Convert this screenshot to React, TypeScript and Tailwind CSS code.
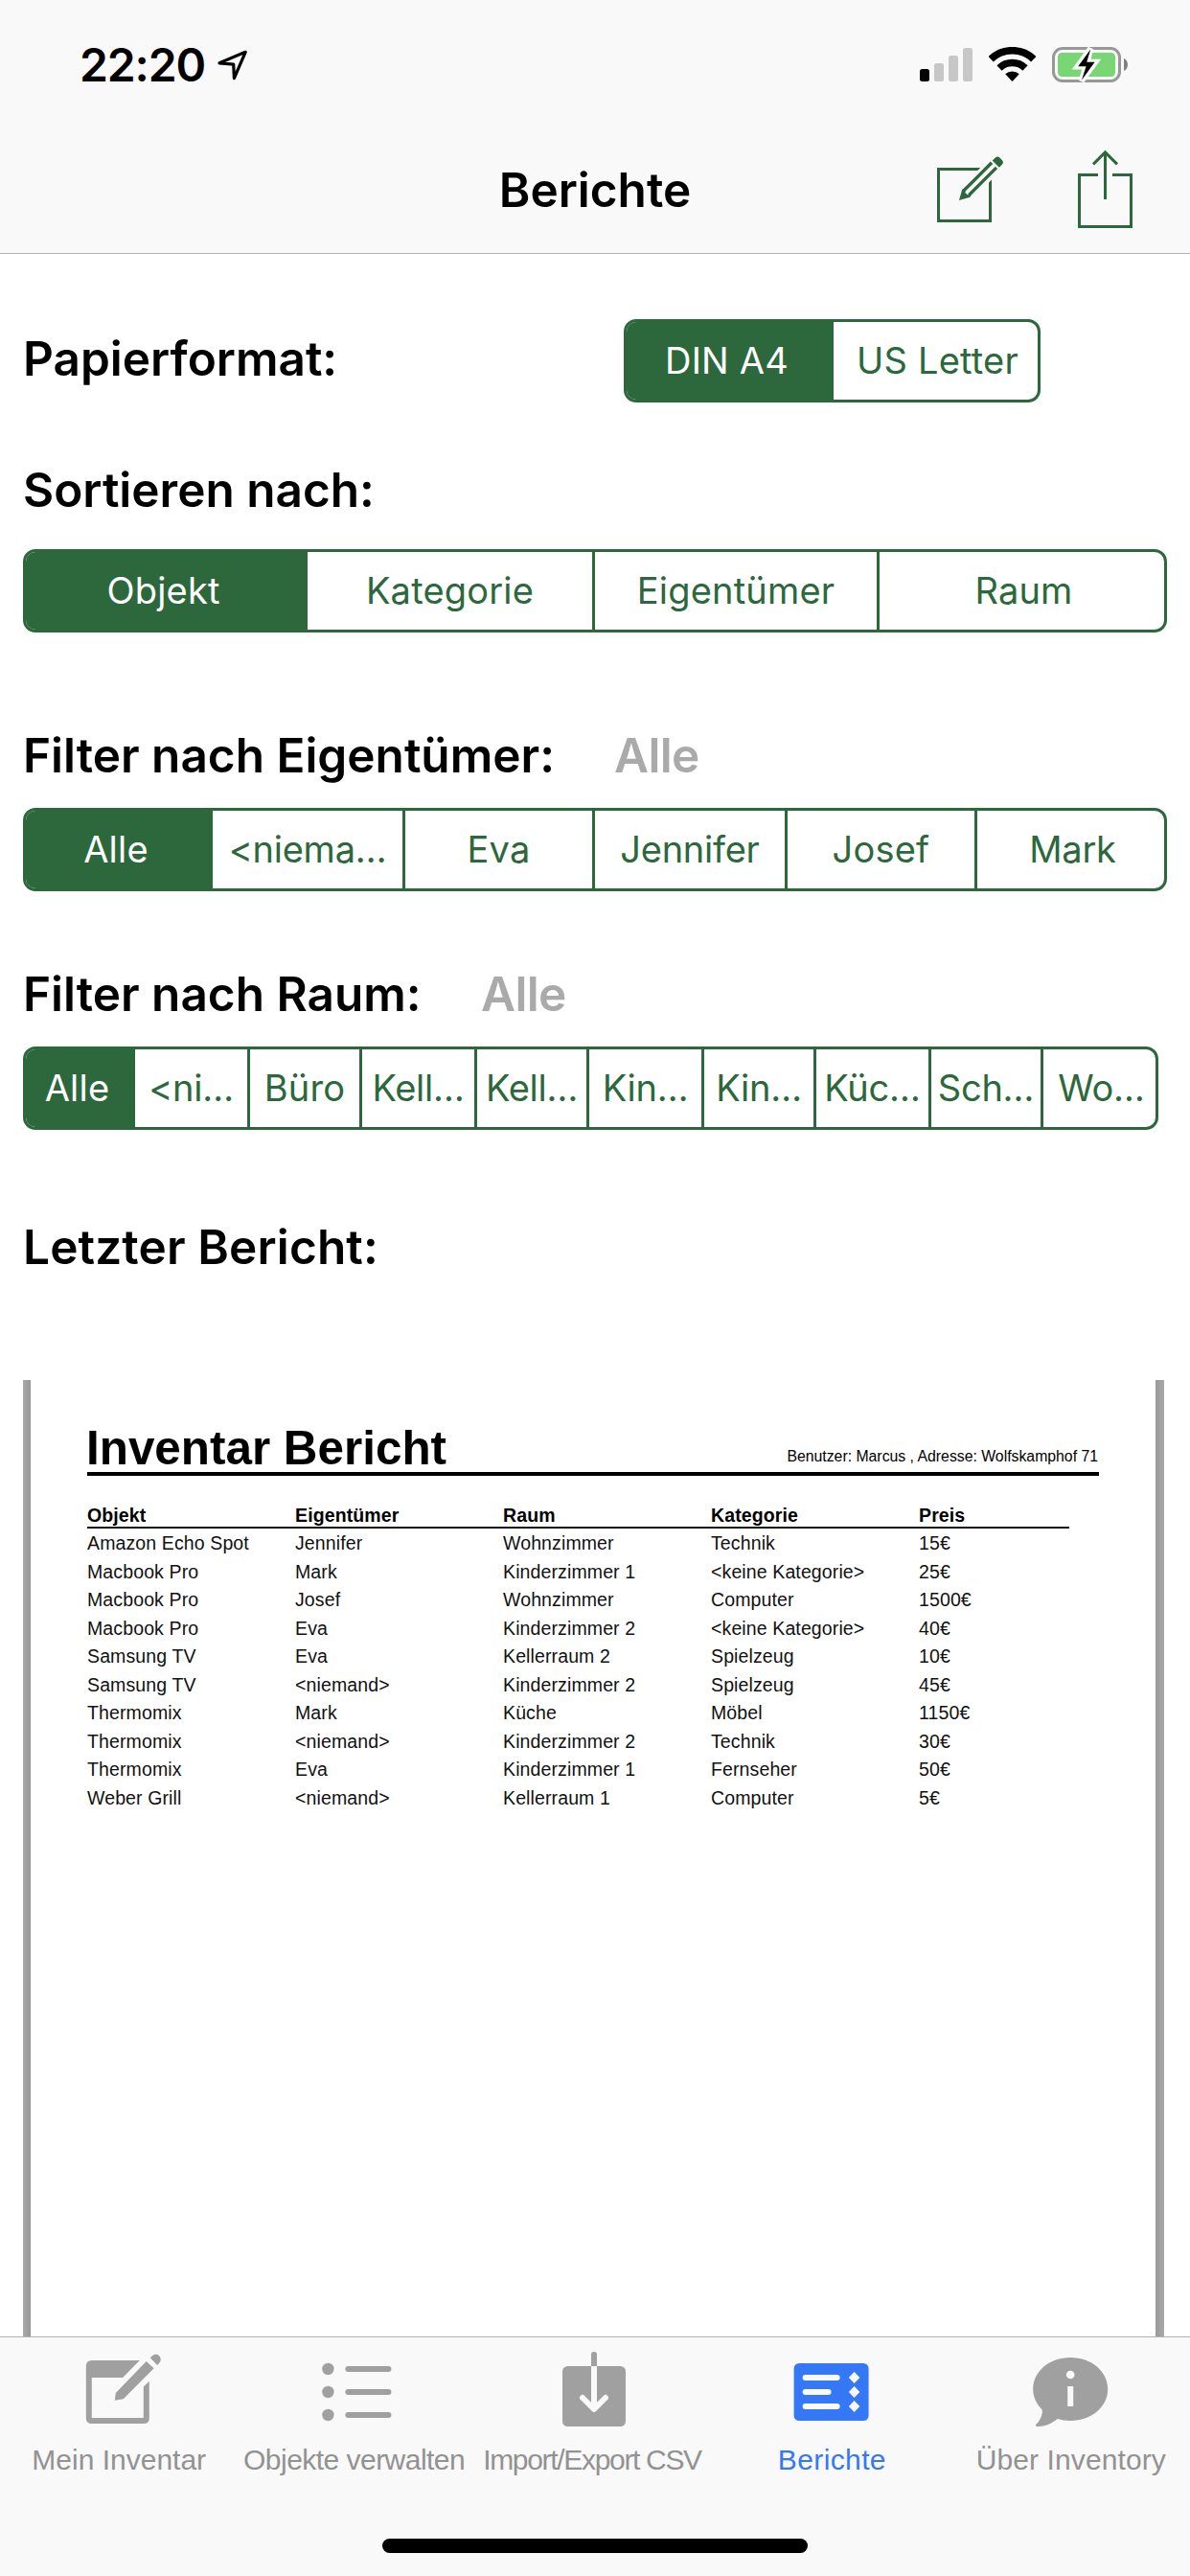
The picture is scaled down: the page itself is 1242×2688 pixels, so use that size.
import clsx from 'clsx';
import type { ReactNode } from 'react';

const INTER = "font-['Inter',sans-serif]";
const HELV = "font-['Liberation_Sans',Arial,sans-serif]";

type Segment = { label: string; width: string };

function Segmented({ segments, className }: { segments: Segment[]; className: string }) {
  return (
    <div className={clsx('flex h-[87px] shrink-0 overflow-hidden rounded-[13px] border-[3px] border-[#2d683c]', className)}>
      {segments.map((s, i) => (
        <button
          key={i}
          className={clsx(
            'flex items-center justify-center whitespace-nowrap text-[38px]',
            s.label.includes('…') || s.label === 'Mark' || s.label === 'Jennifer' ? 'tracking-[-0.25px]' : 'tracking-[0.2px]',
            s.width,
            i === 0 ? 'bg-[#2d683c] pr-[4px] text-white' : 'border-l-[3px] border-[#2d683c] text-[#2d683c]',
            i === segments.length - 1 && 'pl-[4px]',
          )}
        >
          {s.label}
        </button>
      ))}
    </div>
  );
}

function Heading({ children, className }: { children: ReactNode; className?: string }) {
  return <h2 className={clsx('whitespace-nowrap text-[49.5px] leading-[60px] font-semibold', className)}>{children}</h2>;
}

const paper: Segment[] = [
  { label: 'DIN A4', width: 'w-[213px]' },
  { label: 'US Letter', width: 'flex-1' },
];

const sorting: Segment[] = [
  { label: 'Objekt', width: 'w-[291px]' },
  { label: 'Kategorie', width: 'w-[300px]' },
  { label: 'Eigentümer', width: 'w-[297px]' },
  { label: 'Raum', width: 'flex-1' },
];

const owners: Segment[] = [
  { label: 'Alle', width: 'w-[192px]' },
  { label: '<niema…', width: 'w-[201px]' },
  { label: 'Eva', width: 'w-[198px]' },
  { label: 'Jennifer', width: 'w-[201px]' },
  { label: 'Josef', width: 'w-[198px]' },
  { label: 'Mark', width: 'flex-1' },
];

const rooms: Segment[] = [
  { label: 'Alle', width: 'w-[111px]' },
  { label: '<ni…', width: 'w-[120px]' },
  { label: 'Büro', width: 'w-[117px]' },
  { label: 'Kell…', width: 'w-[120px]' },
  { label: 'Kell…', width: 'w-[117px]' },
  { label: 'Kin…', width: 'w-[120px]' },
  { label: 'Kin…', width: 'w-[117px]' },
  { label: 'Küc…', width: 'w-[120px]' },
  { label: 'Sch…', width: 'w-[117px]' },
  { label: 'Wo…', width: 'flex-1' },
];

const rows = [
  ['Amazon Echo Spot', 'Jennifer', 'Wohnzimmer', 'Technik', '15€'],
  ['Macbook Pro', 'Mark', 'Kinderzimmer 1', '<keine Kategorie>', '25€'],
  ['Macbook Pro', 'Josef', 'Wohnzimmer', 'Computer', '1500€'],
  ['Macbook Pro', 'Eva', 'Kinderzimmer 2', '<keine Kategorie>', '40€'],
  ['Samsung TV', 'Eva', 'Kellerraum 2', 'Spielzeug', '10€'],
  ['Samsung TV', '<niemand>', 'Kinderzimmer 2', 'Spielzeug', '45€'],
  ['Thermomix', 'Mark', 'Küche', 'Möbel', '1150€'],
  ['Thermomix', '<niemand>', 'Kinderzimmer 2', 'Technik', '30€'],
  ['Thermomix', 'Eva', 'Kinderzimmer 1', 'Fernseher', '50€'],
  ['Weber Grill', '<niemand>', 'Kellerraum 1', 'Computer', '5€'],
];

function StatusBar() {
  return (
    <div className="flex h-[132px] items-center pt-[3px] pr-[65px] pl-[83px]">
      <span className="text-[48px] leading-[60px] font-semibold tracking-[-1.1px]">22:20</span>
      <svg className="ml-[12px]" width="34" height="36" viewBox="226 49.5 34 36" fill="none" stroke="#000" strokeWidth="3.2" strokeLinejoin="round">
        <path d="M229 65.3 256.2 53.8 244.4 81.2 243.7 66.6Z" />
      </svg>
      <div className="ml-auto flex items-center gap-[17px]">
        <svg width="55" height="37" viewBox="960 49 55 37">
          <rect x="960" y="72" width="10" height="13" rx="2.5" fill="#000" />
          <rect x="975" y="66" width="10" height="19" rx="2.5" fill="#c7c7c7" />
          <rect x="990" y="58" width="10" height="27" rx="2.5" fill="#c7c7c7" />
          <rect x="1005" y="50" width="10" height="35" rx="2.5" fill="#c7c7c7" />
        </svg>
        <svg width="49" height="37" viewBox="1032 49 49 37" fill="none" stroke="#000" strokeWidth="7.6">
          <path d="M1034.2 61.7A32.1 32.1 0 0 1 1078.8 61.7" />
          <path d="M1043 71A19.5 19.5 0 0 1 1070 71" />
          <path d="M1056.5 85 1049.2 77.3A10.7 10.7 0 0 1 1063.8 77.3Z" fill="#000" stroke="none" />
        </svg>
        <svg width="79" height="37" viewBox="1098 49 79 37">
          <rect x="1099.5" y="50.5" width="69" height="34" rx="9.5" fill="none" stroke="#989898" strokeWidth="3" />
          <rect x="1104" y="55" width="60" height="25" rx="4.5" fill="#78d774" />
          <path d="M1173 61C1178.3 63 1178.3 72 1173 74Z" fill="#808080" />
          <path d="M1138.3 50.5 1124.5 69.5H1133L1128.8 84.5 1143.3 64.8H1134.8Z" fill="#f9f9f9" stroke="#f9f9f9" strokeWidth="6" />
          <path d="M1138.2 51.5 1125.2 69.2H1133.6L1129 83.6 1142.6 64.8H1134.2Z" fill="#000" />
        </svg>
      </div>
    </div>
  );
}

function NavBar() {
  return (
    <div className="grid h-[132px] grid-cols-[1fr_auto_1fr] items-center">
      <span />
      <h1 className="text-[49.5px] leading-[60px] font-semibold">Berichte</h1>
      <div className="flex gap-[72px] justify-self-end pr-[57px]">
        <svg width="75" height="84" viewBox="975 156 75 84" fill="none" stroke="#2d683c" strokeWidth="3">
          <path d="M1020 175H1023.3L1020.3 178H981V229H1032V190.6L1035 187.6V232H978V175Z" fill="#2d683c" stroke="none" />
          <path d="M1035 169.8 1006 198.8M1040 174.9 1011.4 203.5" strokeWidth="3.4" />
          <path d="M1004.2 197.6 1001 209 1012.4 205.8 1013.6 203 1009.8 203.2 1007.4 201 1007.6 197.4Z" fill="#2d683c" stroke="none" />
          <path d="M1035.7 167.6 1038.6 164.7C1040 163.2 1042 163.2 1043.4 164.6L1045.8 167C1047.3 168.5 1047.3 170.4 1045.8 171.8L1042.8 174.8Z" fill="#2d683c" stroke="none" />
        </svg>
        <svg width="63" height="84" viewBox="1122 156 63 84" fill="none" stroke="#2d683c" strokeWidth="3">
          <path d="M1146 182.5H1126.5V236.5H1180.5V182.5H1161M1153.5 159V208M1141 171.4 1153.5 158.9 1166 171.4" />
        </svg>
      </div>
    </div>
  );
}

function Report() {
  return (
    <section className={clsx('flex h-[998px] w-[1191px]', HELV)}>
      <div className="w-2 bg-linear-to-r from-[#a9a9a9] to-[#979797]" />
      <div className="flex-1 pt-[45px] pl-[59px]">
        <div className="flex h-[55px] w-[1056px] items-end justify-between border-b-4 border-black">
          <h3 className="-ml-px text-[49.4px] leading-[50px] font-bold">Inventar Bericht</h3>
          <p className="pr-px pb-[6px] text-[15.8px] leading-5">Benutzer: Marcus , Adresse: Wolfskamphof 71</p>
        </div>
        <div className="mt-[29px] w-[1025px] whitespace-nowrap text-[19.5px] tracking-[0.12px]">
          <div className="grid h-[26px] grid-cols-[repeat(4,217px)_1fr] border-b-2 border-[#111] leading-6 font-bold">
            {['Objekt', 'Eigentümer', 'Raum', 'Kategorie', 'Preis'].map((h) => (
              <span key={h}>{h}</span>
            ))}
          </div>
          <div className="pt-px text-[#111]">
            {rows.map((r, i) => (
              <div key={i} className="grid h-[29.55px] grid-cols-[repeat(4,217px)_1fr] leading-[29.55px]">
                {r.map((c, j) => (
                  <span key={j}>{c}</span>
                ))}
              </div>
            ))}
          </div>
        </div>
      </div>
      <div className="w-[9px] bg-linear-to-r from-[#999999] to-[#a9a9a9]" />
    </section>
  );
}

const tabs: { label: string; viewBox: string; text: string; icon: ReactNode }[] = [
  {
    label: 'Mein Inventar',
    viewBox: '76.2 2451 96 84',
    text: 'tracking-normal',
    icon: (
      <>
        <path d="M146 2463H96Q90 2463 90 2469V2523Q90 2529 96 2529H150Q156 2529 156 2523V2484.7L150 2490.5V2523H96V2481H128.3Z" />
        <path d="M152.9 2464 160.8 2471.3 129 2503.3 120 2504.8 121 2497Z" />
        <path d="M157 2460.3 159 2458.3C161 2456.2 164.5 2456.2 166.3 2458.2C168.5 2460.4 168.5 2463.5 166.5 2465.7L164.3 2467.9Z" />
      </>
    ),
  },
  {
    label: 'Objekte verwalten',
    viewBox: '324.6 2451 96 84',
    text: 'tracking-[-0.53px] -translate-x-[3px]',
    icon: [2472, 2496, 2520].map((y) => (
      <g key={y}>
        <circle cx="342" cy={y} r="6.2" />
        <rect x="360" y={y - 3} width="48" height="6" rx="3" />
      </g>
    )),
  },
  {
    label: 'Import/Export CSV',
    viewBox: '573 2451 96 84',
    text: 'tracking-[-1.32px] -translate-x-[3px]',
    icon: (
      <>
        <rect x="587" y="2469" width="66" height="63" rx="5.5" />
        <path d="M617 2469V2457A3 3 0 0 1 623 2457V2469Z" />
        <path d="M620 2469V2512" stroke="#f9f9f9" strokeWidth="6" fill="none" />
        <path d="M608 2502 620 2514 632 2502" stroke="#f9f9f9" strokeWidth="6" strokeLinecap="round" strokeLinejoin="round" fill="none" />
      </>
    ),
  },
  {
    label: 'Berichte',
    viewBox: '821.4 2451 96 84',
    text: 'tracking-[0.38px] -translate-x-[1px]',
    icon: (
      <>
        <rect x="829" y="2466" width="78" height="60" rx="5.5" />
        <g fill="#f9f9f9">
          <rect x="838" y="2478" width="39" height="6" rx="3" />
          <rect x="838" y="2493" width="30" height="6" rx="3" />
          <rect x="838" y="2508" width="39" height="6" rx="3" />
          <path d="M892 2475 897.8 2481 892 2487 886.2 2481ZM892 2490 897.8 2496 892 2502 886.2 2496ZM892 2505 897.8 2511 892 2517 886.2 2511Z" />
        </g>
      </>
    ),
  },
  {
    label: 'Über Inventory',
    viewBox: '1069.8 2451 96 84',
    text: 'tracking-[0.1px]',
    icon: (
      <>
        <path d="M1117 2460C1139 2460 1156 2474.5 1156 2493C1156 2511.5 1139 2526 1117 2526Q1109.5 2526 1103.5 2524C1097 2529 1091 2532 1083 2532C1080.5 2532 1080 2530.5 1082 2529C1086.5 2524.5 1089 2516 1087 2514C1081.5 2508.5 1078 2501 1078 2493C1078 2474.5 1095 2460 1117 2460Z" />
        <circle cx="1117" cy="2478" r="4.3" fill="#f9f9f9" />
        <rect x="1114" y="2490" width="6" height="21" fill="#f9f9f9" />
      </>
    ),
  },
];

function TabBar() {
  return (
    <nav className={clsx('flex h-[250px] flex-col items-center border-t border-[#b2b2b2] bg-[#f9f9f9]', HELV)}>
      <div className="grid w-full grid-cols-5">
        {tabs.map((t) => (
          <div key={t.label} className={clsx('flex flex-col items-center pt-3', t.label === 'Berichte' ? 'text-[#3478f6]' : 'text-[#a0a0a0]')}>
            <svg width="96" height="84" viewBox={t.viewBox} fill="currentColor">
              {t.icon}
            </svg>
            <span className={clsx('mt-[14px] whitespace-nowrap text-[30px] leading-9', t.label !== 'Berichte' && 'text-[#929292]', t.text)}>{t.label}</span>
          </div>
        ))}
      </div>
      <div className="mt-16 h-[15px] w-[444px] rounded-full bg-black" />
    </nav>
  );
}

export default function App() {
  return (
    <div className={clsx('flex h-[2688px] w-[1242px] flex-col overflow-hidden bg-white text-black', INTER)}>
      <header className="h-[265px] border-b border-[#b2b2b2] bg-[#f9f9f9]">
        <StatusBar />
        <NavBar />
      </header>
      <main className="h-[2173px] px-6 pt-[68px]">
        <div className="flex items-center">
          <Heading className="-mt-[5px] w-[627px]">Papierformat:</Heading>
          <Segmented segments={paper} className="w-[435px]" />
        </div>
        <Heading className="mt-[61px]">Sortieren nach:</Heading>
        <Segmented segments={sorting} className="mt-8" />
        <div className="mt-[98px] flex">
          <Heading className="w-[617px]">Filter nach Eigentümer:</Heading>
          <Heading className="tracking-[-0.6px] text-[#aaaaaa]">Alle</Heading>
        </div>
        <Segmented segments={owners} className="mt-[25px]" />
        <div className="mt-[77px] flex">
          <Heading className="w-[478px]">Filter nach Raum:</Heading>
          <Heading className="tracking-[-0.6px] text-[#aaaaaa]">Alle</Heading>
        </div>
        <Segmented segments={rooms} className="mt-[25px] w-[1185px]" />
        <Heading className="mt-[92px] mb-[109px] tracking-[0.15px]">Letzter Bericht:</Heading>
        <Report />
      </main>
      <TabBar />
    </div>
  );
}
